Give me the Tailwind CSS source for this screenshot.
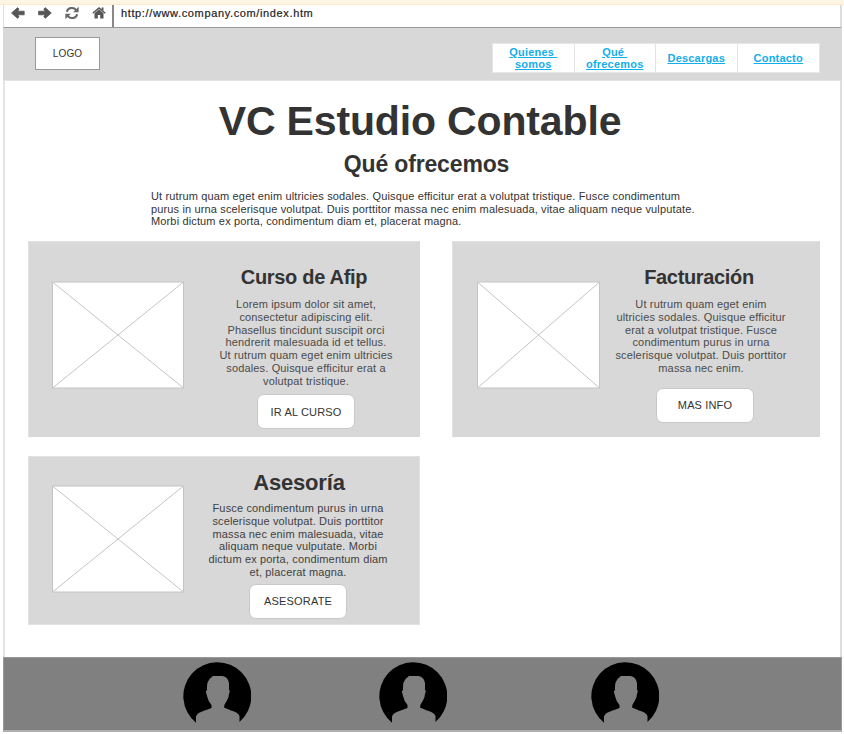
<!DOCTYPE html>
<html lang="es">
<head>
<meta charset="utf-8">
<title>VC Estudio Contable</title>
<script src="https://cdn.jsdelivr.net/npm/@tailwindcss/browser@4"></script>
</head>
<body class="bg-white w-[844px] h-[734px] overflow-hidden font-['Liberation_Sans',Arial,sans-serif] text-[#333]">
<div class="h-[5px] bg-[#fef6e2] border-b border-[#fde9cc]"></div>
<div class="ml-[3px] w-[839px] h-[727px] flex flex-col">
  <div class="h-[23px] shrink-0 border-l border-r-2 border-b border-l-[#ddd] border-r-[#ddd] border-b-[#999] flex">
    <svg class="w-[108px] h-[22px] shrink-0" viewBox="4 5 108 22" fill="#555">
      <path stroke="#555" stroke-width=".8" stroke-linejoin="round" d="M11.500 13l6-5.300 1.500 1.300-1.200 2.200H24.200v3.600h-6.400l1.200 2.200-1.500 1.300z"/>
      <path stroke="#555" stroke-width=".8" stroke-linejoin="round" d="M51.300 13l-6-5.300-1.500 1.300 1.200 2.200H38.600v3.600h6.400l-1.200 2.200 1.500 1.300z"/>
      <path fill="none" stroke="#666" stroke-width="2" d="M66.800 11.800a5.300 5 0 0 1 9.300-2M77.200 14.200a5.300 5 0 0 1-9.300 2"/>
      <path fill="#666" d="M78.600 6.800v5.400h-5.400zM65.400 19.200v-5.400h5.400z"/>
      <path d="M99 7l6.700 5.700-.9 1L99 8.900l-5.800 4.800-.9-1zM101.600 7.500h1.900v3.200l-1.900-1.600zM99 9.500l4.500 3.800V18.500h-3.300v-3.500h-2.400v3.500h-3.300V13.300z"/>
    </svg>
    <div class="w-[2px] bg-[#888]"></div>
    <div class="ml-[7px] mt-[1px] text-[11px] leading-[14px] tracking-[0.630px] text-[#222] [-webkit-text-stroke:0.200px_#222]">http://www.company.com/index.htm</div>
  </div>
  <header class="h-[53px] shrink-0 bg-[#d8d8d8] border-b border-[#e2e2e2] flex justify-between items-start pl-[32px] pr-[22px]">
    <div class="mt-[9px] w-[65px] h-[33px] bg-white border border-[#999] flex items-center justify-center text-[10px] tracking-[0.100px] text-[#333]">LOGO</div>
    <nav class="mt-[15px] h-[30px] w-[328px] bg-white border border-[#e6e6e6] grid grid-cols-4 divide-x divide-[#e2e2e2] text-[11px] leading-[12px] font-bold text-[#12aeeb] text-center">
      <a class="flex items-center justify-center underline whitespace-pre tracking-[0.200px]">Quienes 
somos</a>
      <a class="flex items-center justify-center underline whitespace-pre tracking-[0.200px]">Qué 
ofrecemos</a>
      <a class="flex items-center justify-center underline tracking-[0.200px]">Descargas</a>
      <a class="flex items-center justify-center underline tracking-[0.200px]">Contacto</a>
    </nav>
  </header>
  <main class="grow border-l-2 border-r-2 border-l-[#e4e4e4] border-r-[#ddd] px-[23px]">
    <h1 class="pt-[15px] h-[64px] text-[41px] leading-[50px] font-bold text-center tracking-[-0.150px] -ml-[5px]">VC Estudio Contable</h1>
    <h2 class="h-[44px] pt-[6px] text-[23px] leading-[26px] font-bold text-center tracking-[-0.150px] ml-[8px]">Qué ofrecemos</h2>
    <p class="ml-[123px] mt-[1px] h-[51px] text-[11px] leading-[12.700px] tracking-[0.143px] whitespace-nowrap">Ut rutrum quam eget enim ultricies sodales. Quisque efficitur erat a volutpat tristique. Fusce condimentum<br>purus in urna scelerisque volutpat. Duis porttitor massa nec enim malesuada, vitae aliquam neque vulputate.<br>Morbi dictum ex porta, condimentum diam et, placerat magna.</p>
    <div class="grid grid-cols-[392px_368px] gap-x-[32px] gap-y-[19px] items-start">
      <section class="h-[196px] bg-[#d8d8d8] border-l border-t border-[#e2e2e2] flex">
        <svg class="ml-[23px] mt-[39px] w-[132px] h-[108px] shrink-0" viewBox="0 0 132 108"><path d="M.5 1h131v106H.5zM.5 1l131 106M131.500 1L.5 107" fill="#fff" stroke="#c4c4c4"/></svg>
        <div class="ml-[20px] w-[204px] flex flex-col items-center text-center whitespace-nowrap">
          <h3 class="mt-[23px] text-[20px] leading-[24px] font-bold tracking-[-0.300px] -ml-[4px]">Curso de Afip</h3>
          <p class="mt-[9px] text-[11px] leading-[12.800px] tracking-[0.150px] text-[#4a4a4a]">Lorem ipsum dolor sit amet,<br>consectetur adipiscing elit.<br>Phasellus tincidunt suscipit orci<br>hendrerit malesuada id et tellus.<br>Ut rutrum quam eget enim ultricies<br>sodales. Quisque efficitur erat a<br>volutpat tristique.</p>
          <button class="mt-[6px] w-[98px] h-[35px] shrink-0 rounded-[7px] bg-white border border-[#c8c8c8] text-[11px] tracking-[0.150px] pt-[2px]">IR AL CURSO</button>
        </div>
      </section>
      <section class="h-[196px] bg-[#d8d8d8] border-l border-t border-[#e2e2e2] flex">
        <svg class="ml-[24px] mt-[39px] w-[124px] h-[108px] shrink-0" viewBox="0 0 124 108"><path d="M.5 1h122v106H.5zM.5 1l122 106M122.500 1L.5 107" fill="#fff" stroke="#c4c4c4"/></svg>
        <div class="w-[200px] flex flex-col items-center text-center whitespace-nowrap">
          <h3 class="mt-[23px] text-[20px] leading-[24px] font-bold tracking-[-0.350px] -ml-[4px]">Facturación</h3>
          <p class="mt-[9px] text-[11px] leading-[12.800px] tracking-[0.150px] text-[#4a4a4a]">Ut rutrum quam eget enim<br>ultricies sodales. Quisque efficitur<br>erat a volutpat tristique. Fusce<br>condimentum purus in urna<br>scelerisque volutpat. Duis porttitor<br>massa nec enim.</p>
          <button class="mt-[13px] ml-[8px] w-[98px] h-[35px] shrink-0 rounded-[7px] bg-white border border-[#c8c8c8] text-[11px] tracking-[0.150px]">MAS INFO</button>
        </div>
      </section>
      <section class="h-[169px] bg-[#d8d8d8] border border-[#e2e2e2] flex">
        <svg class="ml-[23px] mt-[28px] w-[132px] h-[108px] shrink-0" viewBox="0 0 132 108"><path d="M.5 1h131v106H.5zM.5 1l131 106M131.500 1L.5 107" fill="#fff" stroke="#c4c4c4"/></svg>
        <div class="ml-[14px] w-[200px] flex flex-col items-center text-center whitespace-nowrap">
          <h3 class="mt-[13px] text-[22px] leading-[26px] font-bold tracking-[-0.200px] ml-[2px]">Asesoría</h3>
          <p class="mt-[6px] text-[11px] leading-[12.800px] tracking-[0.150px] text-[#404040]">Fusce condimentum purus in urna<br>scelerisque volutpat. Duis porttitor<br>massa nec enim malesuada, vitae<br>aliquam neque vulputate. Morbi<br>dictum ex porta, condimentum diam<br>et, placerat magna.</p>
          <button class="mt-[5px] w-[98px] h-[35px] shrink-0 rounded-[7px] bg-white border border-[#c8c8c8] text-[11px] tracking-[0.200px]">ASESORATE</button>
        </div>
      </section>
    </div>
  </main>
  <footer class="h-[75px] shrink-0 bg-[#808080] border border-[#999] border-b-2 border-b-[#b0b0b0] flex items-start pl-[179px] pt-[4px]">
    <svg class="w-[68px] h-[62px]" viewBox="0 0 68 62"><path d="M13 60.700A34 34 0 1 1 56.500 60L56.500 54Q55 50 48 48.500L41 45.500 41.500 42.500Q45.500 37 46 32L47 28.500H46V21Q45 15 39.500 14H30L26.500 17Q24 20 24 25V28L22.800 29.500 24 34Q25 39 28.500 43V46L19 49.500Q14 51 13 54.500Z"/></svg>
    <svg class="ml-[128px] w-[68px] h-[62px]" viewBox="0 0 68 62"><path d="M13 60.700A34 34 0 1 1 56.500 60L56.500 54Q55 50 48 48.500L41 45.500 41.500 42.500Q45.500 37 46 32L47 28.500H46V21Q45 15 39.500 14H30L26.500 17Q24 20 24 25V28L22.800 29.500 24 34Q25 39 28.500 43V46L19 49.500Q14 51 13 54.500Z"/></svg>
    <svg class="ml-[144px] w-[68px] h-[62px]" viewBox="0 0 68 62"><path d="M13 60.700A34 34 0 1 1 56.500 60L56.500 54Q55 50 48 48.500L41 45.500 41.500 42.500Q45.500 37 46 32L47 28.500H46V21Q45 15 39.500 14H30L26.500 17Q24 20 24 25V28L22.800 29.500 24 34Q25 39 28.500 43V46L19 49.500Q14 51 13 54.500Z"/></svg>
  </footer>
</div>
</body>
</html>
